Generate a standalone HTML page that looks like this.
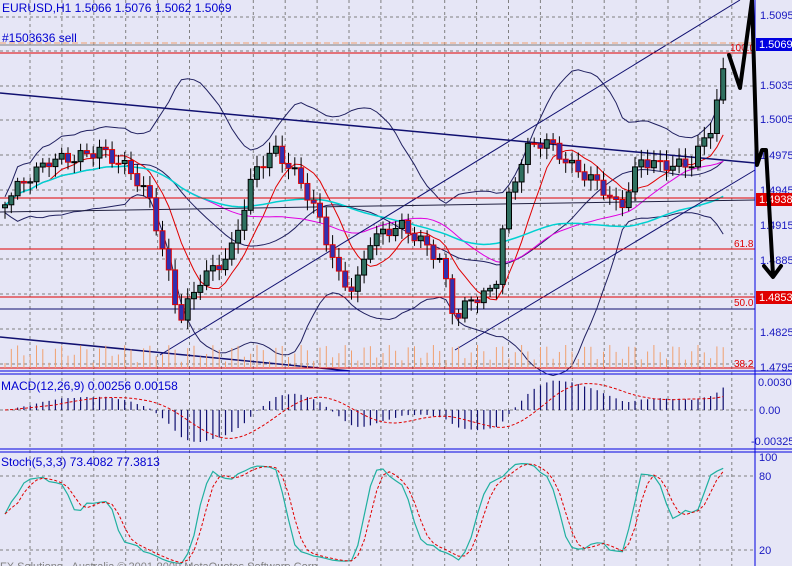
<!DOCTYPE html><html><head><meta charset="utf-8"><style>
body{margin:0;background:#e6e6f6;overflow:hidden}
svg{display:block;font-family:"Liberation Sans",sans-serif}
</style></head><body>
<svg id="s" width="792" height="566" viewBox="0 0 792 566" xmlns="http://www.w3.org/2000/svg">
<rect width="792" height="566" fill="#e6e6f6"/>
<g id="grid" stroke="#808080" stroke-dasharray="3,3" stroke-width="1"></g>
<g id="bg"></g>
<g stroke="#101070" stroke-width="1" fill="none">
<line x1="0" y1="93" x2="755" y2="163" stroke-width="1.5"/>
<line x1="0" y1="337" x2="350" y2="371" stroke-width="1.5"/>
<line x1="160" y1="355" x2="740" y2="0"/>
<line x1="455" y1="350" x2="755" y2="170"/>
<line x1="0" y1="212" x2="755" y2="200" stroke="#202040"/>
</g>
<g stroke="#e00000" stroke-width="1">
<line x1="0" y1="53" x2="755" y2="53"/>
<line x1="0" y1="198" x2="755" y2="198"/>
<line x1="0" y1="249" x2="755" y2="249"/>
<line x1="0" y1="297" x2="755" y2="297"/>
<line x1="0" y1="368" x2="755" y2="368"/>
</g>
<line x1="0" y1="309" x2="755" y2="309" stroke="#101070"/>
<line x1="0" y1="43" x2="755" y2="43" stroke="#f0a070" stroke-dasharray="6,3"/>
<line x1="0" y1="45" x2="755" y2="45" stroke="#808080"/>
<g fill="#e00000" font-size="10"><text x="734" y="247">61.8</text><text x="734" y="306">50.0</text><text x="734" y="367">38.2</text><text x="730" y="51">100.0</text></g>
<g id="vol" stroke="#f0a070"></g>
<g id="main"></g>
<g id="macd"></g>
<g id="stoch"></g>
<g stroke="#0000e0" stroke-width="1">
<line x1="0" y1="371" x2="792" y2="371"/><line x1="0" y1="374" x2="792" y2="374"/>
<line x1="0" y1="449" x2="792" y2="449"/><line x1="0" y1="452" x2="792" y2="452"/>
<line x1="755" y1="0" x2="755" y2="566"/>
</g>
<g fill="#1818c0" font-size="11">
<text x="760" y="19">1.5095</text><text x="760" y="89">1.5035</text><text x="760" y="123">1.5005</text>
<text x="760" y="159">1.4975</text><text x="760" y="194">1.4945</text><text x="760" y="229">1.4915</text>
<text x="760" y="264">1.4885</text><text x="760" y="336">1.4825</text><text x="760" y="371">1.4795</text>
<text x="758" y="386">0.00304</text><text x="759" y="414">0.00</text><text x="751" y="445">-0.00325</text>
<text x="759" y="461">100</text><text x="759" y="480">80</text><text x="759" y="554">20</text>
</g>
<rect x="756" y="38" width="36" height="13" fill="#0000e0"/><text x="759" y="48" fill="#fff" font-size="11">1.5069</text>
<rect x="756" y="193" width="36" height="13" fill="#e00000"/><text x="759" y="203" fill="#fff" font-size="11">1.4938</text>
<rect x="756" y="291" width="36" height="13" fill="#e00000"/><text x="759" y="301" fill="#fff" font-size="11">1.4853</text>
<g fill="#0000d0" font-size="12">
<text x="2" y="12">EURUSD,H1  1.5066 1.5076 1.5062 1.5069</text>
<text x="2" y="42">#1503636 sell</text>
<text x="1" y="390">MACD(12,26,9) 0.00256 0.00158</text>
<text x="1" y="466">Stoch(5,3,3) 73.4082 77.3813</text>
</g>
<text x="0" y="570" fill="#808080" font-size="11">FX Solutions - Australia © 2001-2009 MetaQuotes Software Corp.</text>
<path d="M729,55 L740,88 L752,0 M752,0 L757,165 L762,150 L766,150 L773,275 M764,266 L773,277 L781,266" stroke="#000" stroke-width="4" fill="none" stroke-linejoin="round" stroke-linecap="round"/>
</svg>
<script>
var NS="http://www.w3.org/2000/svg";
function el(p,t,a){var e=document.createElementNS(NS,t);for(var k in a)e.setAttribute(k,a[k]);document.getElementById(p).appendChild(e);return e;}
for(var x=30;x<755;x+=31.9)el("grid","line",{x1:x,y1:0,x2:x,y2:566});
[17,51,86,120,155,190,225,259,294,329,364,410,476,550].forEach(function(y){el("grid","line",{x1:0,y1:y,x2:755,y2:y});});
var K=[[5,200],[20,185],[50,160],[75,158],[100,150],[130,170],[150,200],[165,260],[180,320],[200,280],[230,255],[255,170],[275,150],[300,180],[320,220],[340,280],[355,290],[370,240],[400,225],[420,240],[440,260],[455,320],[470,300],[495,290],[505,210],[525,150],[545,140],[570,165],[600,185],[620,210],[640,160],[660,165],[690,165],[710,130],[722,80],[728,50]];
function f(x){for(var i=1;i<K.length;i++)if(x<=K[i][0]){var a=K[i-1],b=K[i];return a[1]+(b[1]-a[1])*(x-a[0])/(b[0]-a[0]);}return 50;}
var xs=[],c=[];for(var x=5;x<=728;x+=6.3){xs.push(x);c.push(f(x)+Math.sin(x*1.7)*6);}
var n=c.length;
function ma(a,p){var r=[];for(var i=0;i<a.length;i++){var s=0,m=0;for(var j=Math.max(0,i-p+1);j<=i;j++){s+=a[j];m++;}r.push(s/m);}return r;}
function line(g,arr,col,w,dash,off){var d="";for(var i=0;i<n;i++)d+=(i?"L":"M")+xs[i].toFixed(1)+","+(arr[i]+(off||0)).toFixed(1);var a={d:d,stroke:col,fill:"none","stroke-width":w||1};if(dash)a["stroke-dasharray"]=dash;el(g,"path",a);}
var m20=ma(c,20),sd=[];for(var i=0;i<n;i++){var s=0,m=0;for(var j=Math.max(0,i-19);j<=i;j++){s+=(c[j]-m20[i])*(c[j]-m20[i]);m++;}sd.push(Math.sqrt(s/m)*2+8);}
line("bg",m20.map(function(v,i){return v-sd[i]}),"#202060");line("bg",m20.map(function(v,i){return v+sd[i]}),"#202060");
line("bg",m20,"#202060");line("bg",ma(c,8),"#e00000");line("bg",ma(c,30),"#e000e0");line("bg",ma(c,50),"#00d0d0",1.5);
for(var i=0;i<n;i++){var x=xs[i],cl=c[i],op=i?c[i-1]:cl+3;var hi=Math.min(cl,op)-3-Math.abs(Math.sin(i*3.1))*8,lo=Math.max(cl,op)+3+Math.abs(Math.cos(i*2.3))*8;
el("main","line",{x1:x,y1:hi,x2:x,y2:lo,stroke:"#000"});var bull=cl<op;
el("main","rect",{x:x-2.5,y:Math.min(cl,op),width:5,height:Math.max(1,Math.abs(cl-op)),fill:bull?"#2f7060":"#3030b0",stroke:bull?"#000":"#e00000","stroke-width":1});
var v=Math.abs(Math.sin(i*0.9))*18+5;el("vol","line",{x1:x,y1:368,x2:x,y2:368-v});}
function ema(a,p){var k=2/(p+1),r=[a[0]];for(var i=1;i<a.length;i++)r.push(a[i]*k+r[i-1]*(1-k));return r;}
var pr=c.map(function(v){return -v});var e12=ema(pr,12),e26=ema(pr,26),md=e12.map(function(v,i){return v-e26[i]});var sg=ma(md,9);
var mx=0;md.forEach(function(v){mx=Math.max(mx,Math.abs(v))});var sc=32/mx;
for(var i=0;i<n;i++)el("macd","line",{x1:xs[i],y1:410,x2:xs[i],y2:410-md[i]*sc,stroke:"#101070","stroke-width":1.2});
line("macd",sg.map(function(v){return 410-v*sc}),"#e00000",1,"3,2");
var k=[];for(var i=0;i<n;i++){var h=1e9,l=-1e9;for(var j=Math.max(0,i-4);j<=i;j++){h=Math.min(h,c[j]-6);l=Math.max(l,c[j]+6);}k.push((l-c[i])/(l-h)*100);}
var ks=ma(k,3),ds=ma(ks,3);function sy(v){return 570-v*1.12;}
line("stoch",ks.map(sy),"#20b0a0",1.2);line("stoch",ds.map(sy),"#e00000",1,"3,2");
</script>
</body></html>
